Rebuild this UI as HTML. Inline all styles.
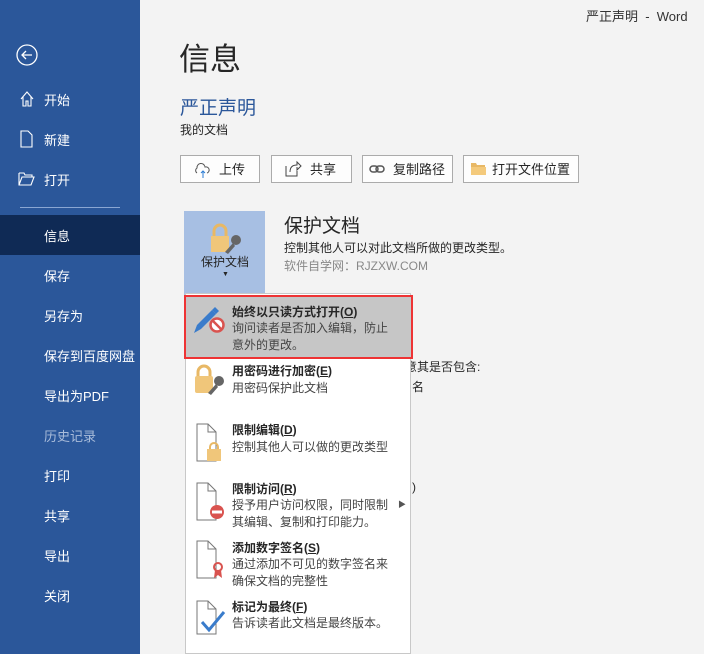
<html><head><style>
body{margin:0;width:704px;height:654px;background:#f3f3f3;font-family:"Liberation Sans","Noto Sans CJK SC",sans-serif;position:relative;overflow:hidden;color:#262626}
.a{position:absolute;white-space:nowrap}
#sb{position:absolute;left:0;top:0;width:140px;height:654px;background:#2b579a;color:#fff}
.it{position:absolute;left:44px;font-size:13px}
.btn{position:absolute;top:155px;height:28px;border:1px solid #ababab;background:#fdfdfd;font-size:13px;line-height:28px;box-sizing:border-box}
.mt{font-size:12px;font-weight:bold;color:#262626}
.md{font-size:12px;color:#444;line-height:17px}
</style></head><body>
<div id="sb">
<svg class="a" style="left:16px;top:44px" width="24" height="24"><circle cx="11" cy="11" r="10" fill="none" stroke="#fff" stroke-width="1.3"/><path d="M16 11H6M10 7L6 11L10 15" fill="none" stroke="#fff" stroke-width="1.3"/></svg>
<svg class="a" style="left:19px;top:90px" width="16" height="18"><path d="M2 9L8 2L14 9M4 7V16H7V11H9V16H12V7" fill="none" stroke="#fff" stroke-width="1.1"/></svg>
<div class="it" style="top:90px">开始</div>
<svg class="a" style="left:20px;top:130px" width="14" height="18"><path d="M1 1H8L12 5V17H1Z" fill="none" stroke="#fff" stroke-width="1.1"/></svg>
<div class="it" style="top:130px">新建</div>
<svg class="a" style="left:18px;top:172px" width="18" height="14"><path d="M1 1H6L7 3H14V5M1 1V13H13L16 5H4L1 13" fill="none" stroke="#fff" stroke-width="1.1"/></svg>
<div class="it" style="top:170px">打开</div>
<div class="a" style="left:20px;top:207px;width:100px;height:1px;background:#8aa6d2"></div>
<div class="a" style="left:0;top:215px;width:140px;height:40px;background:#0f2a55"></div>
<div class="it" style="top:226px">信息</div>
<div class="it" style="top:266px">保存</div>
<div class="it" style="top:306px">另存为</div>
<div class="it" style="top:346px">保存到百度网盘</div>
<div class="it" style="top:386px">导出为PDF</div>
<div class="it" style="top:426px;color:#a9bcda">历史记录</div>
<div class="it" style="top:466px">打印</div>
<div class="it" style="top:506px">共享</div>
<div class="it" style="top:546px">导出</div>
<div class="it" style="top:586px">关闭</div>
</div>
<div class="a" style="left:586px;top:6px;font-size:13px;color:#333">严正声明&nbsp;&nbsp;-&nbsp;&nbsp;Word</div>
<div class="a" style="left:179px;top:34px;font-size:31px;color:#262626">信息</div>
<div class="a" style="left:180px;top:93px;font-size:19px;color:#2b579a">严正声明</div>
<div class="a" style="left:180px;top:121px;font-size:12px">我的文档</div>
<div class="btn" style="left:180px;width:80px;padding-left:38px">上传</div>
<svg class="a" style="left:193px;top:161px" width="18" height="18"><path d="M4 12A3 3 0 0 1 4 7A4 4 0 0 1 12 6A3 3 0 0 1 14 12" fill="none" stroke="#555"/><path d="M10 17V10M8 12L10 10L12 12" stroke="#2b7cd3" fill="none"/></svg>
<div class="btn" style="left:271px;width:81px;padding-left:38px">共享</div>
<svg class="a" style="left:284px;top:160px" width="18" height="18"><path d="M2 6V16H13V11M6 12C6 7 9 5 13 5V2L17 6L13 10V7" fill="none" stroke="#444"/></svg>
<div class="btn" style="left:362px;width:91px;padding-left:30px">复制路径</div>
<svg class="a" style="left:369px;top:164px" width="16" height="10"><rect x="1" y="2" width="8" height="6" rx="3" fill="none" stroke="#555" stroke-width="1.5"/><rect x="7" y="2" width="8" height="6" rx="3" fill="none" stroke="#555" stroke-width="1.5"/></svg>
<div class="btn" style="left:463px;width:116px;padding-left:28px">打开文件位置</div>
<svg class="a" style="left:470px;top:161px" width="17" height="15"><path d="M1 2H6L7 4H15V14H1Z" fill="#e8b865"/><path d="M1 6H16V14H1Z" fill="#f4ca7c"/></svg>
<div class="a" style="left:184px;top:211px;width:81px;height:84px;background:#a7bfe3"></div>
<svg class="a" style="left:208px;top:222px" width="34" height="34"><path d="M6 16V9A6 6 0 0 1 18 9V16" fill="none" stroke="#e8b865" stroke-width="3"/><rect x="3" y="14" width="18" height="16" fill="#f0c67a"/><circle cx="28" cy="18" r="5" fill="#666"/><path d="M25 21L17 30L20 32L27 24" fill="#666"/></svg>
<div class="a" style="left:201px;top:253px;font-size:12px">保护文档</div>
<div class="a" style="left:222px;top:271px;font-size:7px">▼</div>
<div class="a" style="left:284px;top:211px;font-size:19px">保护文档</div>
<div class="a" style="left:284px;top:239px;font-size:12px">控制其他人可以对此文档所做的更改类型。</div>
<div class="a" style="left:284px;top:257px;font-size:12px;color:#888">软件自学网：RJZXW.COM</div>
<div class="a" style="left:405px;top:358px;font-size:12px">意其是否包含:</div>
<div class="a" style="left:412px;top:378px;font-size:12px">名</div>
<div class="a" style="left:412px;top:480px;font-size:12px">)</div>
<div class="a" style="left:185px;top:293px;width:226px;height:361px;background:#fff;border:1px solid #c8c8c8;box-sizing:border-box"></div>
<div class="a" style="left:184px;top:295px;width:229px;height:64px;background:#c6c6c6;border:2px solid #ee3334;box-sizing:border-box"></div>
<svg class="a" style="left:192px;top:303px" width="34" height="34"><path d="M2 30L5 22L20 7L24 11L9 26Z" fill="#3a7ccb"/><path d="M20 7L23 4L27 8L24 11Z" fill="#3a7ccb"/><circle cx="25" cy="22" r="6.5" fill="#fff" stroke="#d9534f" stroke-width="2.5"/><path d="M20.5 17.5L29.5 26.5" stroke="#d9534f" stroke-width="2.5"/></svg>
<div class="a mt" style="left:232px;top:303px">始终以只读方式打开(<u>O</u>)</div>
<div class="a md" style="left:232px;top:320px">询问读者是否加入编辑，防止<br>意外的更改。</div>
<svg class="a" style="left:192px;top:363px" width="34" height="34"><path d="M6 14V9A6 6 0 0 1 18 9V14" fill="none" stroke="#e8b865" stroke-width="3"/><rect x="3" y="13" width="18" height="17" rx="2" fill="#f0c67a"/><circle cx="27" cy="18" r="5" fill="#666"/><path d="M24 21L16 30L19 32L26 24" fill="#666"/></svg>
<div class="a mt" style="left:232px;top:362px">用密码进行加密(<u>E</u>)</div>
<div class="a md" style="left:232px;top:380px">用密码保护此文档</div>
<svg class="a" style="left:196px;top:423px" width="32" height="40"><path d="M1 1H12L20 9V38H1Z" fill="#fff" stroke="#777"/><path d="M12 1V9H20" fill="none" stroke="#777"/><path d="M14 27V24A4 4 0 0 1 22 24V27" fill="none" stroke="#e8b865" stroke-width="2"/><rect x="11" y="26" width="14" height="12" fill="#f0c67a"/></svg>
<div class="a mt" style="left:232px;top:421px">限制编辑(<u>D</u>)</div>
<div class="a md" style="left:232px;top:439px">控制其他人可以做的更改类型</div>
<svg class="a" style="left:196px;top:482px" width="32" height="40"><path d="M1 1H12L20 9V38H1Z" fill="#fff" stroke="#777"/><path d="M12 1V9H20" fill="none" stroke="#777"/><circle cx="21" cy="30" r="7" fill="#d9534f"/><rect x="16" y="28.5" width="10" height="3" fill="#fff"/></svg>
<div class="a mt" style="left:232px;top:480px">限制访问(<u>R</u>)</div>
<div class="a md" style="left:232px;top:497px">授予用户访问权限，同时限制<br>其编辑、复制和打印能力。</div>
<div class="a" style="left:398px;top:499px;font-size:8px;color:#555">▶</div>
<svg class="a" style="left:196px;top:540px" width="32" height="40"><path d="M1 1H12L20 9V38H1Z" fill="#fff" stroke="#777"/><path d="M12 1V9H20" fill="none" stroke="#777"/><circle cx="22" cy="27" r="4" fill="none" stroke="#d9534f" stroke-width="2"/><path d="M19 30L18 38L22 35L26 38L25 30" fill="#d9534f"/></svg>
<div class="a mt" style="left:232px;top:539px">添加数字签名(<u>S</u>)</div>
<div class="a md" style="left:232px;top:556px">通过添加不可见的数字签名来<br>确保文档的完整性</div>
<svg class="a" style="left:196px;top:600px" width="32" height="36"><path d="M1 1H12L20 9V34H1Z" fill="#fff" stroke="#777"/><path d="M12 1V9H20" fill="none" stroke="#777"/><path d="M6 22L13 30L28 12" fill="none" stroke="#3a7ccb" stroke-width="3"/></svg>
<div class="a mt" style="left:232px;top:598px">标记为最终(<u>F</u>)</div>
<div class="a md" style="left:232px;top:615px">告诉读者此文档是最终版本。</div>
</body></html>
